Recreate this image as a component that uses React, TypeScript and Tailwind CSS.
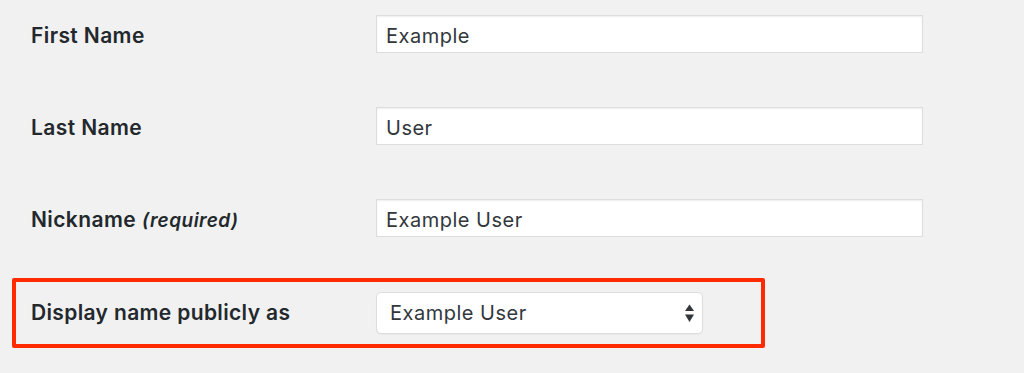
import { useState } from "react"

const font = { fontFamily: "Inter, 'Open Sans', sans-serif" }

function TextRow({ label, hint, value }: { label: string; hint?: string; value: string }) {
  const [v, setV] = useState(value)
  return (
    <div className="flex items-center">
      <label className="mt-[3px] w-[376px] shrink-0 pl-[31px] text-[21px] font-semibold tracking-[0.4px] text-[#23282d]">
        {label}
        {hint && <em className="ml-[6px] text-[19px] font-semibold italic tracking-[0.5px]">{hint}</em>}
      </label>
      <input
        value={v}
        onChange={(e) => setV(e.target.value)}
        className="h-[38px] w-[547px] border border-[#dddddd] bg-white px-[9px] pt-[3px] text-[20px] tracking-[0.5px] text-[#32373c] shadow-[inset_0_1px_2px_rgba(0,0,0,0.07)] outline-none"
        style={font}
      />
    </div>
  )
}

export default function App() {
  return (
    <div className="h-[373px] w-[1024px] overflow-hidden bg-[#f1f1f1] pt-[15px]" style={font}>
      <TextRow label="First Name" value="Example" />
      <div className="mt-[54px]">
        <TextRow label="Last Name" value="User" />
      </div>
      <div className="mt-[54px]">
        <TextRow label="Nickname" hint="(required)" value="Example User" />
      </div>

      {/* highlighted row */}
      <div className="ml-[12px] mt-[41px] flex h-[70px] w-[753px] items-center rounded-[2px] border-4 border-[#ff2a00]">
        <label className="w-[360px] shrink-0 pl-[15px] text-[21px] font-semibold tracking-[0.35px] text-[#23282d]">
          Display name publicly as
        </label>
        <div className="relative flex h-[42px] w-[327px] items-center rounded-[5px] border border-[#dddddd] bg-white pl-[13px] shadow-[0_1px_1px_rgba(0,0,0,0.04)]">
          <span className="text-[20px] tracking-[0.5px] text-[#32373c]">Example User</span>
          <svg className="absolute right-[8px] top-[11px]" width="9" height="19" viewBox="0 0 9 19">
            <path d="M4.5 0.5 L9 7 L0 7 Z" fill="#32373c" />
            <path d="M0 10.5 L9 10.5 L4.5 18 Z" fill="#32373c" />
          </svg>
        </div>
      </div>
    </div>
  )
}
